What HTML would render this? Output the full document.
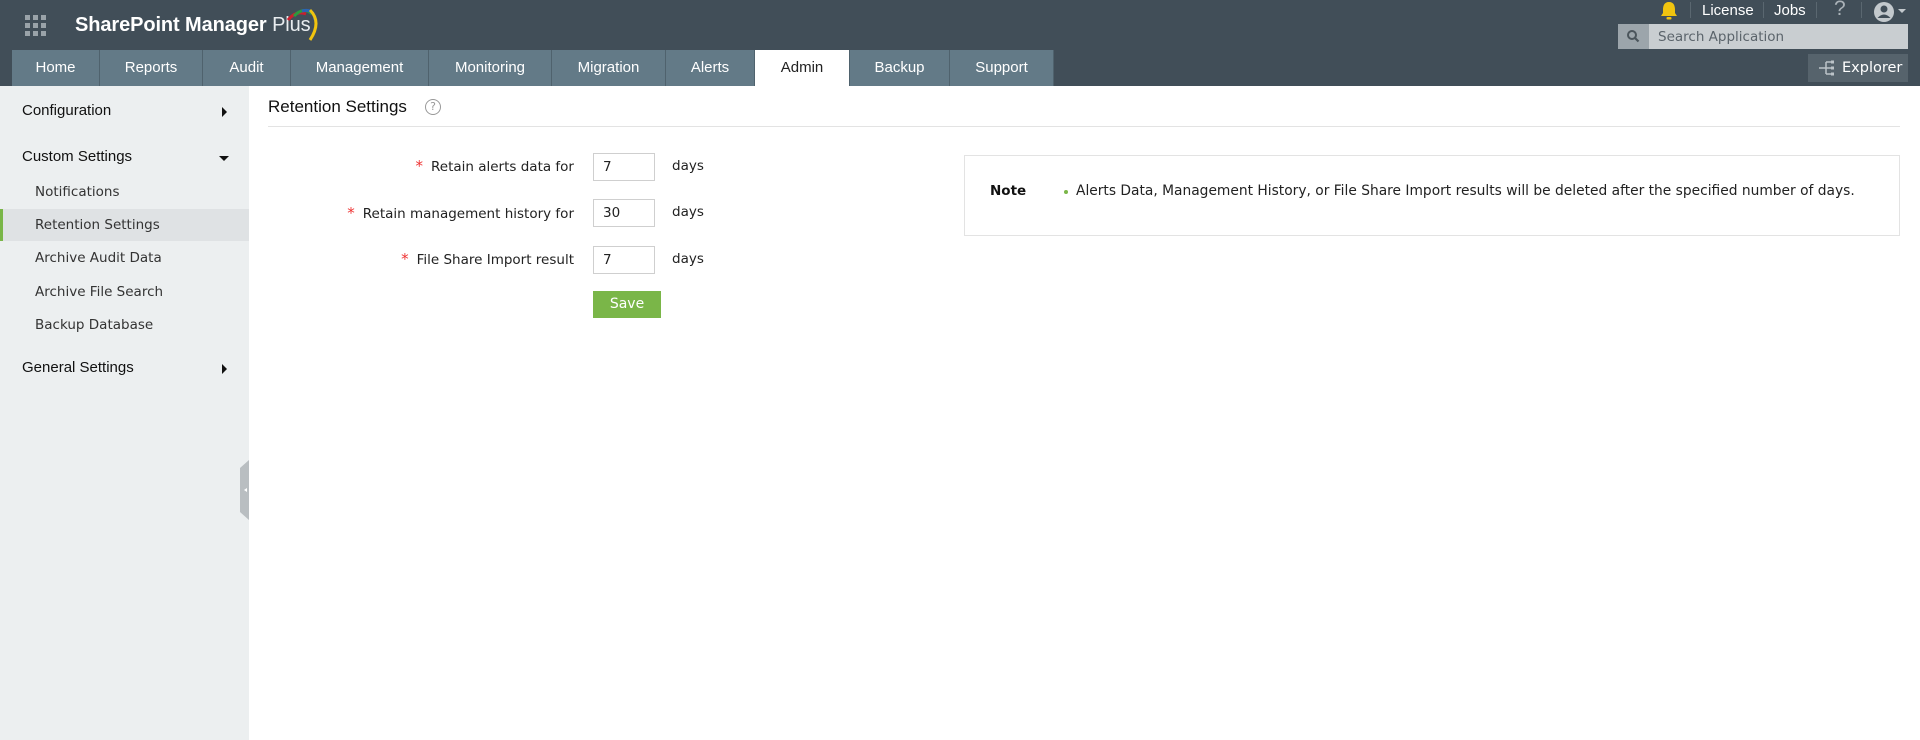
<!DOCTYPE html>
<html><head><meta charset="utf-8"><style>
*{box-sizing:border-box;margin:0;padding:0}
body{width:1920px;height:740px;overflow:hidden;background:#fff;font-family:"DejaVu Sans","Liberation Sans",sans-serif;font-size:13px;color:#222;position:relative}
.hdr{position:absolute;left:0;top:0;width:1920px;height:86px;background:#414e58}
.grid{position:absolute;left:25px;top:15px;width:22px;height:22px}
.grid i{position:absolute;width:5px;height:5px;background:#9aa3a9}
.logo{position:absolute;left:75px;top:14px;color:#fff;font-family:"Liberation Sans",sans-serif;font-size:20px;letter-spacing:-0.1px}
.logo span{font-weight:normal;color:#e8ecef}
.tabs{position:absolute;left:12px;top:50px;height:36px;display:flex}
.tab{height:36px;background:#637a87;color:#fff;font-family:"Liberation Sans",sans-serif;font-size:15px;line-height:36px;text-align:center;border-right:1px solid #4f626d}
.tab.act{background:#fff;color:#222}
.tr{position:absolute;top:2px;color:#fff;font-family:"Liberation Sans",sans-serif;font-size:15px;line-height:18px}
.sep{position:absolute;top:2px;width:1px;height:16px;background:#5a6770}
.search{position:absolute;left:1618px;top:24px;width:290px;height:25px;background:#c9ced1}
.search .ic{position:absolute;left:0;top:0;width:31px;height:25px;background:#9ca5ab}
.search .t{position:absolute;left:40px;top:5px;color:#5b646b;font-size:13.5px}
.expl{position:absolute;left:1808px;top:54px;width:100px;height:28px;background:#56636c;color:#fff;font-size:14.5px;line-height:28px;padding-left:34px}
.side{position:absolute;left:0;top:86px;width:249px;height:654px;background:#eceff0}
.si{position:absolute;left:22px;font-family:"Liberation Sans",sans-serif;font-size:15px;color:#111}
.sub{position:absolute;left:35px;font-size:13.5px;color:#333}
.sel{position:absolute;left:0;top:123px;width:249px;height:32px;background:#dfe2e4;border-left:3px solid #7ab648}
.arr{position:absolute;left:222px;width:0;height:0}
.title{position:absolute;left:268px;top:97px;font-family:"Liberation Sans",sans-serif;font-size:17px;color:#111}
.q{position:absolute;left:425px;top:99px;width:16px;height:16px;border:1px solid #999;border-radius:50%;color:#999;font-size:11px;text-align:center;line-height:14px}
.div{position:absolute;left:268px;top:126px;width:1632px;height:1px;background:#e3e3e3}
.lbl{position:absolute;right:1346px;font-size:13.5px;color:#222;white-space:nowrap}
.lbl b{color:#e33;font-weight:normal;margin-right:8px;font-size:15px}
.inp{position:absolute;left:593px;width:62px;height:28px;border:1px solid #cfcfcf;padding:5px 0 0 9px;font-size:13.5px}
.days{position:absolute;left:672px;font-size:13.5px}
.save{position:absolute;left:593px;top:291px;width:68px;height:27px;background:#7ab648;color:#fff;font-size:14px;text-align:center;line-height:27px}
.note{position:absolute;left:964px;top:155px;width:936px;height:81px;border:1px solid #e3e3e3}
.note .n{position:absolute;left:25px;top:27px;font-weight:bold;font-size:13.5px;color:#111}
.note .d{position:absolute;left:99px;top:34px;width:4px;height:4px;border-radius:50%;background:#7ab648}
.note .x{position:absolute;left:111px;top:27px;font-size:13.8px;color:#222;white-space:nowrap}
</style></head><body>
<div class="hdr">
 <div class="grid">
  <i style="left:0;top:0"></i><i style="left:8px;top:0"></i><i style="left:16px;top:0"></i>
  <i style="left:0;top:8px"></i><i style="left:8px;top:8px"></i><i style="left:16px;top:8px"></i>
  <i style="left:0;top:16px"></i><i style="left:8px;top:16px"></i><i style="left:16px;top:16px"></i>
 </div>
 <div class="logo"><b style="font-weight:bold">SharePoint Manager</b> <span>Plus</span></div>
 <svg style="position:absolute;left:282px;top:6px" width="40" height="36" viewBox="0 0 40 36">
  <path d="M6 14 Q14 4 24 8" stroke="#c8202f" stroke-width="3" fill="none"/>
  <path d="M12 10 Q22 0 30 8" stroke="#2b9a3e" stroke-width="3" fill="none"/>
  <path d="M20 5 Q32 2 33 14" stroke="#2a64b5" stroke-width="3" fill="none"/>
  <path d="M28 4 Q40 16 28 34" stroke="#f1c40f" stroke-width="3" fill="none"/>
 </svg>
 <div class="tabs">
  <div class="tab" style="width:88px">Home</div>
  <div class="tab" style="width:103px">Reports</div>
  <div class="tab" style="width:88px">Audit</div>
  <div class="tab" style="width:138px">Management</div>
  <div class="tab" style="width:123px">Monitoring</div>
  <div class="tab" style="width:114px">Migration</div>
  <div class="tab" style="width:89px">Alerts</div>
  <div class="tab act" style="width:95px">Admin</div>
  <div class="tab" style="width:100px">Backup</div>
  <div class="tab" style="width:104px">Support</div>
 </div>
 <svg style="position:absolute;left:1659px;top:1px" width="20" height="19" viewBox="0 0 20 19"><path d="M10 1 C5 1 4 5 4 9 L4 12 L2 15 L18 15 L16 12 L16 9 C16 5 15 1 10 1Z" fill="#f1c40f"/><rect x="7.5" y="16" width="5" height="2.5" rx="1" fill="#f1c40f"/></svg>
 <div class="sep" style="left:1690px"></div>
 <div class="tr" style="left:1702px">License</div>
 <div class="sep" style="left:1763px"></div>
 <div class="tr" style="left:1774px">Jobs</div>
 <div class="sep" style="left:1816px"></div>
 <div class="tr" style="left:1834px;top:0;color:#aab2b8;font-size:21px">?</div>
 <div class="sep" style="left:1861px"></div>
 <svg style="position:absolute;left:1874px;top:1px" width="34" height="22" viewBox="0 0 34 22"><circle cx="10" cy="11" r="10" fill="#c3c9cd"/><circle cx="10" cy="8" r="3.5" fill="#414e58"/><path d="M3.5 17 Q10 10 16.5 17" fill="#414e58"/><path d="M24 8 L32 8 L28 12Z" fill="#c3c9cd"/></svg>
 <div class="search"><div class="ic"><svg width="31" height="25" viewBox="0 0 31 25"><circle cx="14" cy="11" r="4" stroke="#4b555c" stroke-width="2" fill="none"/><path d="M17 14 L20.5 17.5" stroke="#4b555c" stroke-width="2.2"/></svg></div><div class="t">Search Application</div></div>
 <div class="expl"><svg style="position:absolute;left:10px;top:6px" width="18" height="16" viewBox="0 0 18 16"><path d="M1 8 H8 M8 2 V14 M8 2 H13 M8 8 H13 M8 14 H13" stroke="#bcc3c8" stroke-width="1.5" fill="none"/><rect x="13" y="0.5" width="3" height="3" fill="#bcc3c8"/><rect x="13" y="6.5" width="3" height="3" fill="#bcc3c8"/><rect x="13" y="12.5" width="3" height="3" fill="#bcc3c8"/></svg>Explorer</div>
</div>
<div class="side">
 <div class="si" style="top:16px">Configuration</div>
 <div class="arr" style="top:21px;border-left:5px solid #111;border-top:5px solid transparent;border-bottom:5px solid transparent"></div>
 <div class="si" style="top:62px">Custom Settings</div>
 <div class="arr" style="top:70px;left:219px;border-top:5px solid #111;border-left:5px solid transparent;border-right:5px solid transparent"></div>
 <div class="sub" style="top:98px">Notifications</div>
 <div class="sel"></div>
 <div class="sub" style="top:131px">Retention Settings</div>
 <div class="sub" style="top:164px">Archive Audit Data</div>
 <div class="sub" style="top:198px">Archive File Search</div>
 <div class="sub" style="top:231px">Backup Database</div>
 <div class="si" style="top:273px">General Settings</div>
 <div class="arr" style="top:278px;border-left:5px solid #111;border-top:5px solid transparent;border-bottom:5px solid transparent"></div>
 <svg style="position:absolute;left:240px;top:374px" width="9" height="60" viewBox="0 0 9 60"><path d="M0 8 L9 0 L9 60 L0 52Z" fill="#b9bec1"/><path d="M4 30 L7 28 L7 32Z" fill="#fff"/></svg>
</div>
<div class="title">Retention Settings</div>
<div class="q">?</div>
<div class="div"></div>
<div class="lbl" style="top:157px"><b>*</b>Retain alerts data for</div>
<div class="inp" style="top:153px">7</div>
<div class="days" style="top:158px">days</div>
<div class="lbl" style="top:204px"><b>*</b>Retain management history for</div>
<div class="inp" style="top:199px">30</div>
<div class="days" style="top:204px">days</div>
<div class="lbl" style="top:250px"><b>*</b>File Share Import result</div>
<div class="inp" style="top:246px">7</div>
<div class="days" style="top:251px">days</div>
<div class="save">Save</div>
<div class="note"><div class="n">Note</div><div class="d"></div><div class="x">Alerts Data, Management History, or File Share Import results will be deleted after the specified number of days.</div></div>
</body></html>
